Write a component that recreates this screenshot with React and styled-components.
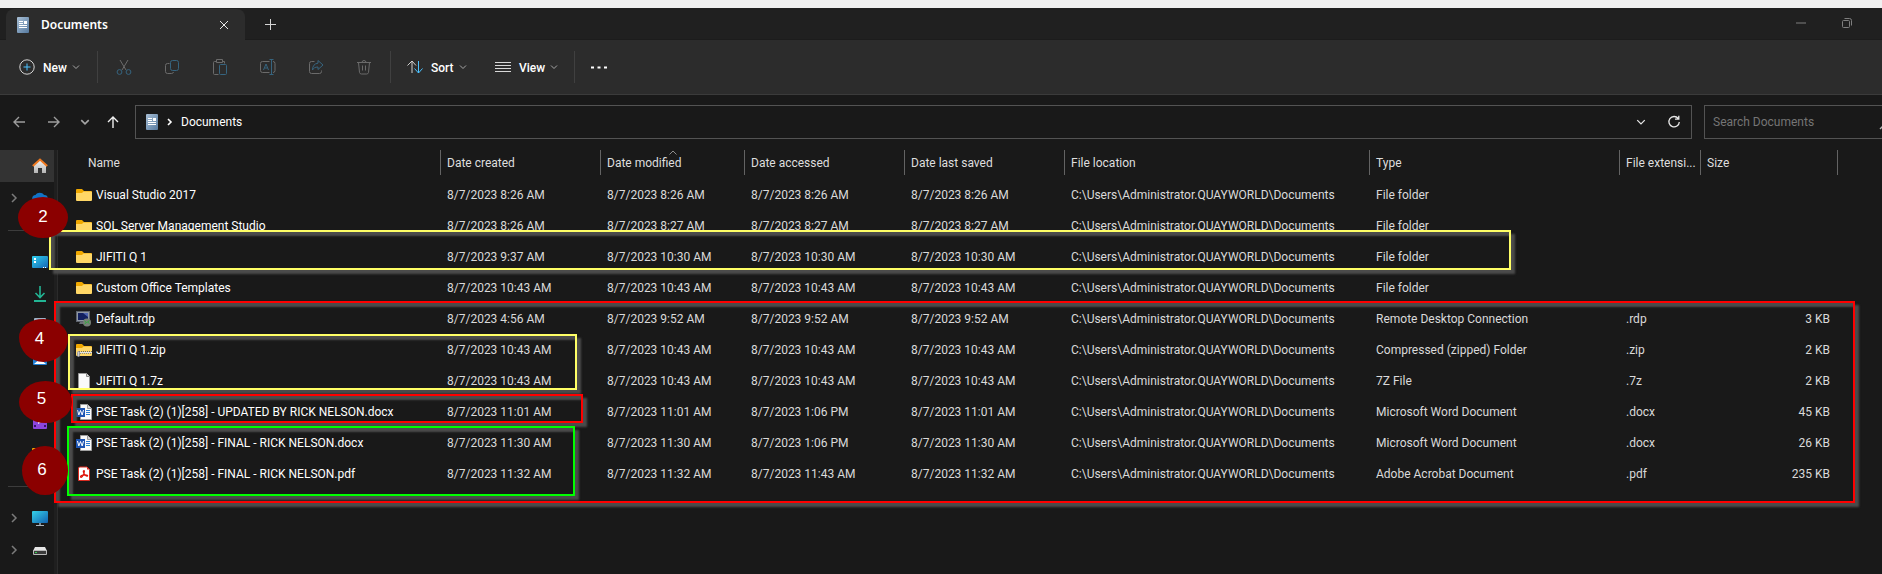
import React from "react";
import styled, { createGlobalStyle } from "styled-components";

const GlobalStyle = createGlobalStyle`
  *, *::before, *::after { box-sizing: border-box; }
  body {
    margin: 0;
    background: #191919;
    font-family: Roboto, "Segoe UI", sans-serif;
    font-size: 12px;
    line-height: 16px;
    color: #fff;
  }
  button, input { font: inherit; color: inherit; }
`;

const Page = styled.div`
  position: relative;
  display: flex;
  flex-direction: column;
  min-height: 100vh;
  overflow: hidden;
`;

const DesktopStrip = styled.div`
  height: 8px;
  background: #f0f0f0;
`;

const TitleBar = styled.header`
  display: flex;
  height: 32px;
  padding: 1px 12px 0 6px;
  background: #202020;
  box-shadow: inset 0 -1px 0 #1c1c1c;
`;

const Tab = styled.div`
  display: flex;
  align-items: center;
  width: 239px;
  padding: 0 9px 0 11px;
  gap: 12px;
  background: #2c2c2c;
  border-radius: 8px 8px 0 0;
  font-family: "Noto Sans", "Segoe UI", sans-serif;
  font-weight: 600;
`;

const TabTitle = styled.span`
  flex: 1;
`;

const BareButton = styled.button`
  display: flex;
  align-items: center;
  justify-content: center;
  flex: none;
  width: ${(p) => p.$w || 24}px;
  height: ${(p) => p.$h || 24}px;
  padding: 0;
  border: 0;
  background: none;
  color: ${(p) => p.$color || "#fff"};
`;

const WindowButtons = styled.div`
  display: flex;
  margin-left: auto;
`;

const Toolbar = styled.div`
  display: flex;
  align-items: center;
  height: 55px;
  padding-left: 11px;
  background: #2c2c2c;
  border-bottom: 1px solid #3b3b3b;
`;

const MenuButton = styled.button`
  display: flex;
  align-items: center;
  height: 32px;
  padding: 0 ${(p) => p.$right || 8}px 0 8px;
  border: 0;
  background: none;
  font-weight: 500;
`;

const MenuLabel = styled.span`
  width: ${(p) => p.$w}px;
  margin-left: 8px;
  padding-top: 2px;
  text-align: left;
  white-space: nowrap;
`;

const Separator = styled.span`
  width: 1px;
  height: 32px;
  background: #404040;
`;

const IconGroup = styled.div`
  display: flex;
  width: ${(p) => p.$w}px;
  justify-content: center;
  gap: ${(p) => p.$gap || 0}px;
`;

const NavBar = styled.nav`
  display: flex;
  align-items: center;
  padding: 10px 0 11px 4px;
`;

const NavButtons = styled.div`
  display: flex;
  align-items: center;
  width: 131px;
`;

const AddressBox = styled.div`
  display: flex;
  align-items: center;
  flex: 1;
  height: 34px;
  padding: 0 5px 0 10px;
  gap: 7px;
  border: 1px solid #535353;
`;

const Crumb = styled.a`
  flex: 1;
  color: #fff;
  text-decoration: none;
`;

const SearchBox = styled.label`
  position: relative;
  flex: 0 0 178px;
  height: 34px;
  margin-left: 12px;
  border: 1px solid #535353;
  border-right: 0;
`;

const SearchInput = styled.input`
  width: 100%;
  height: 32px;
  padding: 0 8px;
  border: 0;
  outline: 0;
  background: none;
  &::placeholder { color: #757575; opacity: 1; }
`;

const SearchGlyph = styled.svg`
  position: absolute;
  right: -13px;
  top: 8px;
`;

const Body = styled.div`
  display: flex;
  flex: 1;
`;

const Sidebar = styled.aside`
  display: flex;
  flex-direction: column;
  flex: none;
  width: 54px;
`;

const SideItem = styled.a`
  display: flex;
  align-items: center;
  justify-content: space-between;
  height: 32px;
  padding: 0 6px 0 8px;
  background: ${(p) => (p.$active ? "#333" : "none")};
`;

const SideRule = styled.div`
  display: flex;
  align-items: center;
  height: 32px;
  padding-left: 8px;
  &::before { content: ""; flex: 1; height: 1px; background: #3c3c3c; }
`;

const Splitter = styled.div`
  flex: none;
  width: 4px;
  background: #1f1f1f;
  border-right: 1px solid #2b2b2b;
`;

const Main = styled.main`
  flex: 1;
  min-width: 0;
`;

const FileTable = styled.table`
  width: 100%;
  table-layout: fixed;
  border-collapse: collapse;
`;

const Col = styled.col`
  width: ${(p) => (p.$w ? p.$w + "px" : "auto")};
`;

const HeadCell = styled.th`
  height: 29px;
  padding: 0;
  vertical-align: top;
  font-weight: 400;
`;

const HeadButton = styled.button`
  position: relative;
  display: block;
  width: 100%;
  height: 25px;
  padding: 1px 0 0 ${(p) => (p.$first ? 30 : 6)}px;
  border: 0;
  border-left: ${(p) => (p.$first ? "0" : "1px solid #636363")};
  background: none;
  color: #dedede;
  text-align: left;
  white-space: nowrap;
`;

const SortMark = styled.svg`
  position: absolute;
  left: calc(50% - 4px);
  top: 0;
`;

const Cell = styled.td`
  height: 31px;
  padding: 0 7px 0 ${(p) => (p.$name ? 18 : 7)}px;
  color: ${(p) => (p.$name ? "#fff" : "#dadada")};
  text-align: ${(p) => (p.$right ? "right" : "left")};
  white-space: nowrap;
`;

const FileName = styled.div`
  display: flex;
  align-items: center;
  gap: 4px;
`;

const Frame = styled.div`
  position: absolute;
  pointer-events: none;
  left: ${(p) => p.$x}px;
  top: ${(p) => p.$y}px;
  width: ${(p) => p.$w}px;
  height: ${(p) => p.$h}px;
  border: 2px solid ${(p) => p.$c};
  box-shadow: 4px 4px 2px #4b4b4b, inset 4px 4px 2px #4b4b4b;
`;

const Marker = styled.div`
  position: absolute;
  display: flex;
  justify-content: center;
  left: ${(p) => p.$x}px;
  top: ${(p) => p.$y}px;
  width: ${(p) => p.$w}px;
  height: ${(p) => p.$h}px;
  padding-top: ${(p) => p.$top}px;
  padding-right: ${(p) => p.$shift || 0}px;
  border-radius: ${(p) => p.$r || "50%"};
  background: #8b0000;
  font: 17px/20px "Liberation Sans", Arial, sans-serif;
`;

const Svg = ({ w = 16, h = 16, children, ...rest }) => (
  <svg width={w} height={h} viewBox={`0 0 ${w} ${h}`} fill="none" aria-hidden="true" {...rest}>
    {children}
  </svg>
);

const Chevron = ({ color = "#a6a6a6", w = 8, sw = 1 }) => (
  <svg width={w} height={w} viewBox="0 0 8 8" fill="none" aria-hidden="true">
    <path d="M1 2.5 4 5.5 7 2.5" stroke={color} strokeWidth={sw} />
  </svg>
);

const DocIcon = () => (
  <Svg w={12}>
    <defs>
      <linearGradient id="docg" x1="0" y1="0" x2="1" y2="1">
        <stop offset="0" stopColor="#a9c0d6" />
        <stop offset="1" stopColor="#55799f" />
      </linearGradient>
    </defs>
    <rect width="12" height="16" rx="1" fill="url(#docg)" />
    <path d="M2 4.5h4M2 6.5h4M2 8.5h8M2 10.5h8" stroke="#fff" />
    <rect x="7" y="4" width="3" height="3" fill="#fff" />
  </Svg>
);

const BLUE = "#36647f";
const GRAY = "#6b6b6b";

const toolIcons = [
  ["Cut", <Svg key="i"><path d="M4 1l6 10M12 1L6 11" stroke={GRAY} /><circle cx="3.5" cy="13" r="2.4" stroke={BLUE} /><circle cx="12.5" cy="13" r="2.4" stroke={BLUE} /></Svg>],
  ["Copy", <Svg key="i"><path d="M5.5 4.5H3.5a2 2 0 0 0-2 2v6a2 2 0 0 0 2 2h4a2 2 0 0 0 2-1.5" stroke={GRAY} /><rect x="6.5" y="1.5" width="8" height="10" rx="2" stroke={BLUE} /></Svg>],
  ["Paste", <Svg key="i"><path d="M4.5 2.5h-2a1 1 0 0 0-1 1v11a1 1 0 0 0 1 1h4M10.5 2.5h2v2M4.5.5h6v3h-6z" stroke={GRAY} /><rect x="7.5" y="5.5" width="7" height="10" rx="1" stroke={BLUE} /></Svg>],
  ["Rename", <Svg key="i"><path d="M9.5 2.5h-7a2 2 0 0 0-2 2v7a2 2 0 0 0 2 2h7M13 2.5a2 2 0 0 1 2 2v7a2 2 0 0 1-2 2" stroke={GRAY} /><path d="M3.5 11 6 5l2.500 6M4.500 9h3M9.500.5h4M9.500 15.500h4M11.500.5v15" stroke={BLUE} /></Svg>],
  ["Share", <Svg key="i"><path d="M6.500 2.500h-3a2 2 0 0 0-2 2v8a2 2 0 0 0 2 2h8a2 2 0 0 0 2-2v-1" stroke={GRAY} /><path d="M10 1.500 15 6l-5 4.500V8C7 8 5.500 9 4.500 11 4.500 7 6.500 4.500 10 4.200z" stroke={BLUE} /></Svg>],
  ["Delete", <Svg key="i"><path d="M1 3.500h14M6 3.500a2 2 0 0 1 4 0M2.500 3.500l1 10a2 2 0 0 0 2 1.500h5a2 2 0 0 0 2-1.500l1-10M6.500 6.500v5M9.500 6.500v5" stroke={GRAY} /></Svg>],
];

const FolderShape = () => (
  <>
    <path d="M0 3a1 1 0 0 1 1-1h5l2 2h7a1 1 0 0 1 1 1v3H0z" fill="#f0a800" />
    <path d="M0 6h6l1.500-1.500H15a1 1 0 0 1 1 1V13a1 1 0 0 1-1 1H1a1 1 0 0 1-1-1z" fill="#ffd766" />
  </>
);

const PageShape = () => (
  <>
    <path d="M2.500.5h8l3 3v12h-11z" fill="#fafafa" stroke="#9a9a9a" />
    <path d="M10.500.5v3h3" fill="#d8d8d8" stroke="#8a8a8a" />
  </>
);

const fileIcons = {
  folder: <Svg><FolderShape /></Svg>,
  rdp: (
    <Svg>
      <rect x=".5" y=".5" width="13" height="10" fill="#8f97a3" stroke="#5c626c" />
      <rect x="2" y="2" width="10" height="7" fill="#12205f" />
      <path d="M7 2h5v4z" fill="#4c63b0" />
      <path d="M4 11h5v2H3z" fill="#6a6f78" />
      <circle cx="11" cy="11.500" r="4" fill="#788078" />
      <path d="M8.500 10l2 1.500-2 1.500M13.500 9.500l-2 1.500 2 1.500" stroke="#2fae3b" />
    </Svg>
  ),
  zip: (
    <Svg>
      <FolderShape />
      <path d="M3 9.500h13" stroke="#6c6c6c" strokeDasharray="1 1" />
      <path d="M3 10.500h13" stroke="#e4e4e4" />
      <path d="M4 11.500h12" stroke="#8b8b8b" strokeDasharray="1 1" />
      <rect x="1.500" y="9.500" width="2" height="5" rx="1" fill="#cfcfcf" stroke="#9c9c9c" />
    </Svg>
  ),
  page: <Svg><PageShape /></Svg>,
  word: (
    <Svg>
      <path d="M4.500.5h7l4 4v11h-11z" fill="#fafafa" stroke="#a0a0a0" />
      <path d="M11.500.5v4h4" fill="#d8d8d8" stroke="#9a9a9a" />
      <path d="M10 6.500h4M10 8.500h4M10 10.500h4" stroke="#2b7cd3" />
      <rect y="4" width="9" height="9" fill="#1c54b2" />
      <path d="M1.500 6l1.300 5L4.500 6.500 6.200 11l1.300-5" stroke="#fff" />
    </Svg>
  ),
  pdf: (
    <Svg>
      <path d="M3.500 1h7.500l2.500 2.500v11h-11V2z" fill="#fff" stroke="#d92b20" />
      <path d="M11 1l2.500 2.500H11z" fill="#d92b20" />
      <path d="M8 4.500c-1 0-.8 1.500 0 3s2.300 3 3.300 2.600-.2-1.400-2.300-1.300-4.500.9-4.500 2 1.700.3 2.500-1.300S9 4.500 8 4.500z" stroke="#e0150c" strokeWidth="1.200" />
    </Svg>
  ),
};

const sideIcons = {
  home: (
    <Svg>
      <defs><linearGradient id="hg" x1="0" y1="0" x2="0" y2="1"><stop offset="0" stopColor="#f3f3f3" /><stop offset="1" stopColor="#b4b4b4" /></linearGradient></defs>
      <path d="M2 7l6-5 6 5v8H10v-5H6v5H2z" fill="url(#hg)" />
      <path d="M.8 8 8 1.500 15.200 8" stroke="#f0791f" strokeWidth="2" />
    </Svg>
  ),
  cloud: <Svg><path d="M4 12a3.500 3.500 0 0 1-.5-7A5 5 0 0 1 12 5a3.500 3.500 0 0 1 .5 7z" fill="#1173c6" /></Svg>,
  desktop: (
    <Svg>
      <defs><linearGradient id="dg" x1="0" y1="0" x2="1" y2="1"><stop offset="0" stopColor="#2fd0ee" /><stop offset="1" stopColor="#1566b5" /></linearGradient></defs>
      <rect y="2" width="16" height="12" rx="1" fill="url(#dg)" />
      <path d="M2 5h2M2 8h2" stroke="#fff" strokeWidth="2" />
      <path d="M11 13.500h1M13 13.500h1" stroke="#fff" />
    </Svg>
  ),
  download: <Svg><path d="M8 0v11M3.500 7 8 11.500 12.500 7" stroke="#22b594" strokeWidth="1.600" /><path d="M2 15h12" stroke="#22b594" strokeWidth="2" /></Svg>,
  documents: <Svg><rect x="2" y="0" width="12" height="16" rx="1" fill="#9fb3c8" /></Svg>,
  pictures: <Svg><rect x="1" y="1" width="14" height="14" rx="1" fill="#1f7fd6" /><path d="M2 14l6-5 6 5z" fill="#fff" /></Svg>,
  music: <Svg><circle cx="8" cy="8" r="7" fill="#d0542c" /></Svg>,
  videos: <Svg><rect x="1" y="1" width="14" height="14" rx="1" fill="#8b46dd" /><path d="M6 5l4 2.500L6 10z" fill="#fff" /><path d="M2 12h2M12 12h2" stroke="#35136b" strokeWidth="2" /></Svg>,
  folder: <Svg><FolderShape /></Svg>,
  pc: (
    <Svg>
      <defs><linearGradient id="pg" x1="0" y1="0" x2="1" y2="1"><stop offset="0" stopColor="#35d2e8" /><stop offset="1" stopColor="#1261b0" /></linearGradient></defs>
      <rect y="1" width="16" height="12" rx="1" fill="url(#pg)" />
      <path d="M8 13v2" stroke="#7c8893" strokeWidth="2" /><path d="M4 15.500h8" stroke="#aab4bd" />
    </Svg>
  ),
  drive: <Svg><path d="M3 5h10l2 4H1z" fill="#e6e6e6" /><rect x="1" y="8" width="14" height="5" rx="1" fill="#b9b9b9" /><rect x="2" y="9" width="12" height="3" fill="#3b3b3b" /><path d="M3 10.500h2" stroke="#39d353" /></Svg>,
};

const sidebar = [
  { id: "home", label: "Home", active: true },
  { id: "cloud", label: "OneDrive", open: true },
  { rule: true },
  { id: "desktop", label: "Desktop" },
  { id: "download", label: "Downloads" },
  { id: "documents", label: "Documents" },
  { id: "pictures", label: "Pictures" },
  { id: "music", label: "Music" },
  { id: "videos", label: "Videos" },
  { id: "folder", label: "Folder" },
  { rule: true },
  { id: "pc", label: "This PC", open: true },
  { id: "drive", label: "Drive", open: true },
];

const columns = [
  ["Name", 382], ["Date created", 160], ["Date modified", 144], ["Date accessed", 160],
  ["Date last saved", 160], ["File location", 305], ["Type", 250], ["File extensi...", 81], ["Size", 137],
];

const LOCATION = "C:\\Users\\Administrator.QUAYWORLD\\Documents";

const files = [
  ["folder", "Visual Studio 2017", "8:26 AM", "8:26 AM", "8:26 AM", "8:26 AM", "File folder", "", ""],
  ["folder", "SQL Server Management Studio", "8:26 AM", "8:27 AM", "8:27 AM", "8:27 AM", "File folder", "", ""],
  ["folder", "JIFITI Q 1", "9:37 AM", "10:30 AM", "10:30 AM", "10:30 AM", "File folder", "", ""],
  ["folder", "Custom Office Templates", "10:43 AM", "10:43 AM", "10:43 AM", "10:43 AM", "File folder", "", ""],
  ["rdp", "Default.rdp", "4:56 AM", "9:52 AM", "9:52 AM", "9:52 AM", "Remote Desktop Connection", ".rdp", "3 KB"],
  ["zip", "JIFITI Q 1.zip", "10:43 AM", "10:43 AM", "10:43 AM", "10:43 AM", "Compressed (zipped) Folder", ".zip", "2 KB"],
  ["page", "JIFITI Q 1.7z", "10:43 AM", "10:43 AM", "10:43 AM", "10:43 AM", "7Z File", ".7z", "2 KB"],
  ["word", "PSE Task (2) (1)[258] - UPDATED BY RICK NELSON.docx", "11:01 AM", "11:01 AM", "1:06 PM", "11:01 AM", "Microsoft Word Document", ".docx", "45 KB"],
  ["word", "PSE Task (2) (1)[258] - FINAL - RICK NELSON.docx", "11:30 AM", "11:30 AM", "1:06 PM", "11:30 AM", "Microsoft Word Document", ".docx", "26 KB"],
  ["pdf", "PSE Task (2) (1)[258] - FINAL - RICK NELSON.pdf", "11:32 AM", "11:32 AM", "11:43 AM", "11:32 AM", "Adobe Acrobat Document", ".pdf", "235 KB"],
];

export default function App() {
  return (
    <Page>
      <GlobalStyle />
      <DesktopStrip />
      <TitleBar>
        <Tab>
          <DocIcon />
          <TabTitle>Documents</TabTitle>
          <BareButton aria-label="Close tab">
            <Svg w={10} h={10}><path d="M1 1l8 8M9 1l-8 8" stroke="#e8e8e8" /></Svg>
          </BareButton>
        </Tab>
        <BareButton $w={50} $h={30} aria-label="New tab">
          <Svg w={11} h={11}><path d="M5.500 0v11M0 5.500h11" stroke="#d5d5d5" /></Svg>
        </BareButton>
        <WindowButtons>
          <BareButton $w={46} $h={27} aria-label="Minimize">
            <Svg w={10} h={10}><path d="M0 5h10" stroke="#7f7f7f" /></Svg>
          </BareButton>
          <BareButton $w={46} $h={27} aria-label="Restore">
            <Svg w={10} h={10}><rect x=".5" y="2.500" width="7" height="7" rx="1" stroke="#7f7f7f" /><path d="M2.500.5h5a2 2 0 0 1 2 2v5" stroke="#7f7f7f" /></Svg>
          </BareButton>
        </WindowButtons>
      </TitleBar>

      <Toolbar>
        <MenuButton $right={17}>
          <Svg><circle cx="8" cy="8" r="7.200" stroke="#d6d6d6" /><path d="M8 4.500v7M4.500 8h7" stroke="#4cc2ff" /></Svg>
          <MenuLabel $w={29}>New</MenuLabel>
          <Chevron />
        </MenuButton>
        <Separator />
        <IconGroup $w={292}>
          {toolIcons.map(([label, icon]) => (
            <BareButton key={label} $w={48} $h={32} aria-label={label}>{icon}</BareButton>
          ))}
        </IconGroup>
        <Separator />
        <IconGroup $w={183} $gap={12}>
          <MenuButton>
            <Svg><path d="M5 14V2M.5 6.500 5 2l4 4.500" stroke="#cfcfcf" /><path d="M11.500 2v12M7.500 9.500l4 4.500 4-4.500" stroke="#4cc2ff" /></Svg>
            <MenuLabel $w={28}>Sort</MenuLabel>
            <Chevron />
          </MenuButton>
          <MenuButton>
            <Svg><path d="M0 3.500h16M0 6.500h16M0 9.500h16M0 12.500h16" stroke="#d8d8d8" /></Svg>
            <MenuLabel $w={31}>View</MenuLabel>
            <Chevron />
          </MenuButton>
        </IconGroup>
        <Separator />
        <BareButton $w={48} $h={32} aria-label="More options">
          <Svg><path d="M0 8.500h3M6.500 8.500h3M13 8.500h3" stroke="#fff" strokeWidth="2" /></Svg>
        </BareButton>
      </Toolbar>

      <NavBar>
        <NavButtons>
          <BareButton $w={30} aria-label="Back"><Svg w={12} h={12}><path d="M12 6H1M6 1 1 6l5 5" stroke="#9d9d9d" strokeWidth="1.400" /></Svg></BareButton>
          <BareButton $w={40} aria-label="Forward"><Svg w={12} h={12}><path d="M0 6h11M6 1l5 5-5 5" stroke="#9d9d9d" strokeWidth="1.400" /></Svg></BareButton>
          <BareButton $w={22} aria-label="Recent locations"><Chevron w={10} sw={1.300} /></BareButton>
          <BareButton $w={34} aria-label="Up"><Svg w={12} h={12}><path d="M6 12V1M1 6l5-5 5 5" stroke="#f0f0f0" strokeWidth="1.400" /></Svg></BareButton>
        </NavButtons>
        <AddressBox>
          <DocIcon />
          <Svg w={9} h={8}><path d="M3 1l3 3-3 3" stroke="#fff" strokeWidth="1.600" /></Svg>
          <Crumb href="#documents">Documents</Crumb>
          <BareButton $w={28} aria-label="Previous locations"><Chevron w={10} color="#e8e8e8" sw={1} /></BareButton>
          <BareButton $w={24} aria-label="Refresh">
            <Svg w={14} h={14}><path d="M11.200 3.500A5.200 5.200 0 1 0 12.300 7M11.800.8v3.400H8" stroke="#e8e8e8" strokeWidth="1.300" /></Svg>
          </BareButton>
        </AddressBox>
        <SearchBox>
          <SearchInput type="text" aria-label="Search Documents" placeholder="Search Documents" />
          <SearchGlyph width="16" height="16" viewBox="0 0 16 16" fill="none" aria-hidden="true">
            <path d="M1 15l5-5" stroke="#b5b5b5" strokeWidth="1.500" /><circle cx="10" cy="6" r="5" stroke="#b5b5b5" />
          </SearchGlyph>
        </SearchBox>
      </NavBar>

      <Body>
        <Sidebar>
          {sidebar.map((item, i) =>
            item.rule ? (
              <SideRule key={i} />
            ) : (
              <SideItem key={item.id} href={`#${item.id}`} aria-label={item.label} $active={item.active}>
                {item.open ? <Svg w={12} h={12}><path d="M4 2l4 4-4 4" stroke="#7b7b7b" strokeWidth="1.500" /></Svg> : <span />}
                {sideIcons[item.id]}
              </SideItem>
            )
          )}
        </Sidebar>
        <Splitter />
        <Main>
          <FileTable>
            <colgroup>
              {columns.map(([name, w]) => <Col key={name} $w={w} />)}
              <Col />
            </colgroup>
            <thead>
              <tr>
                {columns.map(([name], i) => (
                  <HeadCell key={name} scope="col">
                    <HeadButton $first={i === 0}>
                      {name}
                      {name === "Date modified" && (
                        <SortMark width="8" height="5" viewBox="0 0 8 5" fill="none" aria-hidden="true">
                          <path d="M.5 4.500 4 1l3.500 3.500" stroke="#8c8c8c" />
                        </SortMark>
                      )}
                    </HeadButton>
                  </HeadCell>
                ))}
                <HeadCell as="td"><HeadButton as="div" /></HeadCell>
              </tr>
            </thead>
            <tbody>
              {files.map(([icon, name, created, modified, accessed, saved, type, ext, size]) => (
                <tr key={name}>
                  <Cell $name><FileName>{fileIcons[icon]}<span>{name}</span></FileName></Cell>
                  {[created, modified, accessed, saved].map((t, i) => <Cell key={i}>{`8/7/2023 ${t}`}</Cell>)}
                  <Cell>{LOCATION}</Cell>
                  <Cell>{type}</Cell>
                  <Cell>{ext}</Cell>
                  <Cell $right>{size}</Cell>
                  <Cell />
                </tr>
              ))}
            </tbody>
          </FileTable>
        </Main>
      </Body>

      <Frame $x={49} $y={230} $w={1462} $h={40} $c="#ffff66" />
      <Frame $x={54} $y={301} $w={1801} $h={202} $c="#ff0000" />
      <Frame $x={68} $y={334} $w={509} $h={56} $c="#ffff66" />
      <Frame $x={71} $y={394} $w={512} $h={29} $c="#ff0000" />
      <Frame $x={67} $y={426} $w={508} $h={70} $c="#00ff00" />
      <Marker $x={18} $y={197} $w={50} $h={41} $top={10}>2</Marker>
      <Marker $x={19} $y={319} $w={49} $h={43} $top={10} $shift={8} $r="50% 50% 50% 50% / 42% 46% 54% 58%">4</Marker>
      <Marker $x={19} $y={381} $w={53} $h={42} $top={8} $shift={8}>5</Marker>
      <Marker $x={22} $y={446} $w={46} $h={49} $top={14} $shift={6}>6</Marker>
    </Page>
  );
}
